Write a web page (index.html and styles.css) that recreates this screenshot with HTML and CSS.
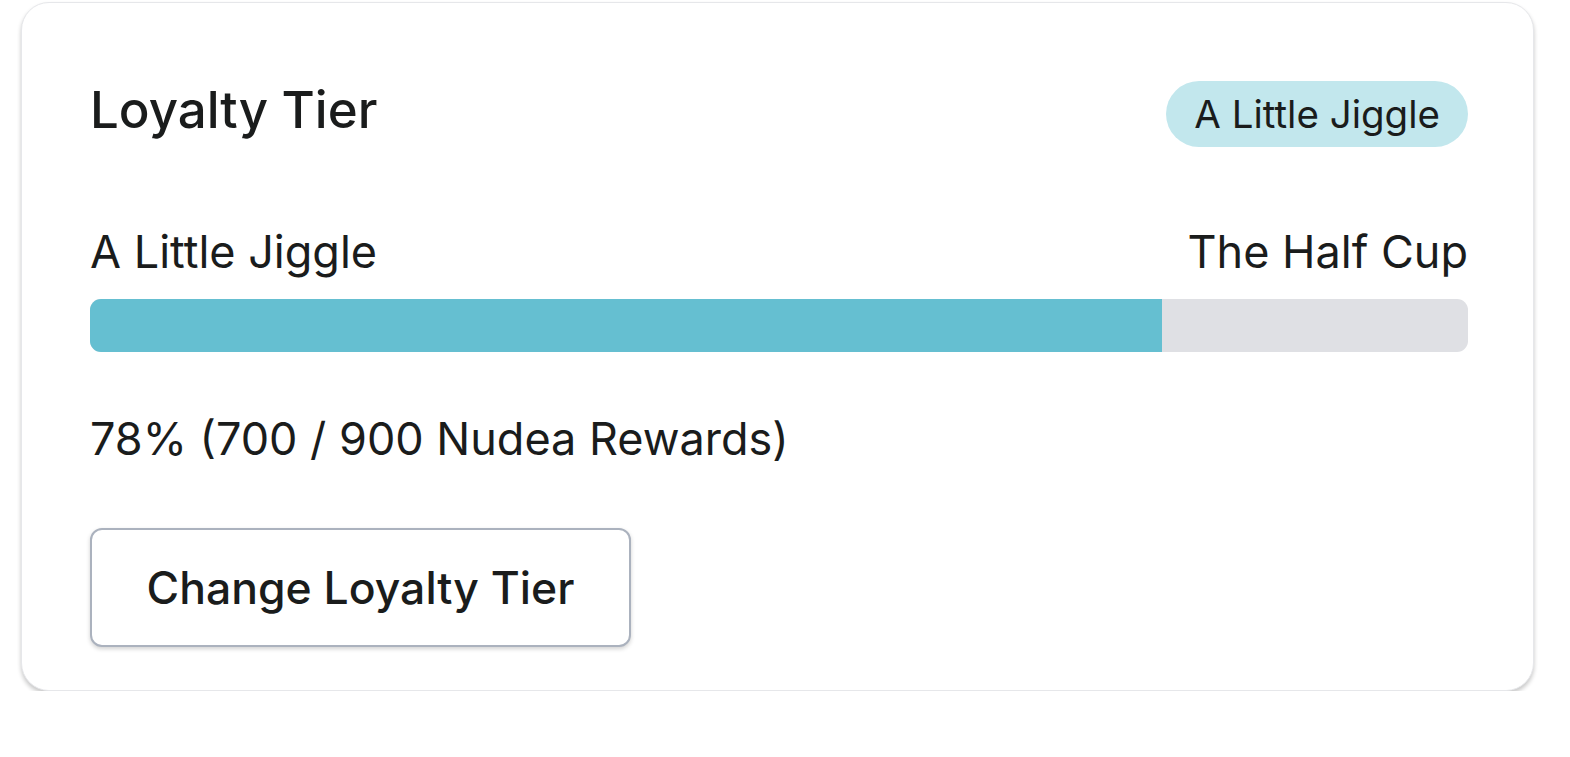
FILE: index.html
```html
<!DOCTYPE html>
<html>
<head>
<meta charset="utf-8">
<link rel="stylesheet" href="styles.css">
</head>
<body>
<div class="card">
  <div class="header">
    <h2 class="title">Loyalty Tier</h2>
    <span class="badge">A Little Jiggle</span>
  </div>
  <div class="labels">
    <span>A Little Jiggle</span>
    <span>The Half Cup</span>
  </div>
  <div class="bar"><div class="fill" style="width:77.8%"></div></div>
  <p class="percent">78% (700 / 900 Nudea Rewards)</p>
  <button class="btn">Change Loyalty Tier</button>
</div>
</body>
</html>
```
FILE: styles.css
```css
* { box-sizing: border-box; }
html, body { margin: 0; padding: 0; background: #fff; }
body {
  font-family: "Inter", "Lato", sans-serif;
  color: #1a1c1c;
  padding: 2px 36px 0 21px;
}
.card {
  height: 689px;
  border: 1px solid #e6e7ea;
  border-radius: 28px;
  background: #fff;
  box-shadow: 0 3px 4px rgba(0,0,0,0.22);
  padding: 78px 65px 0 68px;
  display: flex;
  flex-direction: column;
  align-items: stretch;
}
.header {
  display: flex;
  justify-content: space-between;
  align-items: center;
  height: 66px;
}
.title {
  margin: 0;
  padding-bottom: 9px;
  font-size: 51px;
  font-weight: 500;
  line-height: 57px;
}
.badge {
  height: 66px;
  line-height: 66px;
  padding: 0 28px;
  border-radius: 33px;
  background: #c2e7ed;
  font-size: 38.5px;
}
.labels {
  display: flex;
  justify-content: space-between;
  margin-top: 81px;
  font-size: 45px;
  line-height: 48px;
}
.bar {
  margin-top: 23px;
  height: 53px;
  border-radius: 11px;
  background: #dfe0e4;
  overflow: hidden;
}
.fill {
  height: 100%;
  background: #65bfd1;
}
.percent {
  margin: 63px 0 0;
  font-size: 45px;
  line-height: 48px;
}
.btn {
  margin-top: 65px;
  align-self: flex-start;
  width: 541px;
  height: 119px;
  border: 2px solid #abb2be;
  border-radius: 12px;
  background: #fff;
  box-shadow: 0 2px 4px rgba(0,0,0,0.18);
  font-family: inherit;
  font-size: 44.5px;
  font-weight: 500;
  color: #1a1c1c;
}
```
